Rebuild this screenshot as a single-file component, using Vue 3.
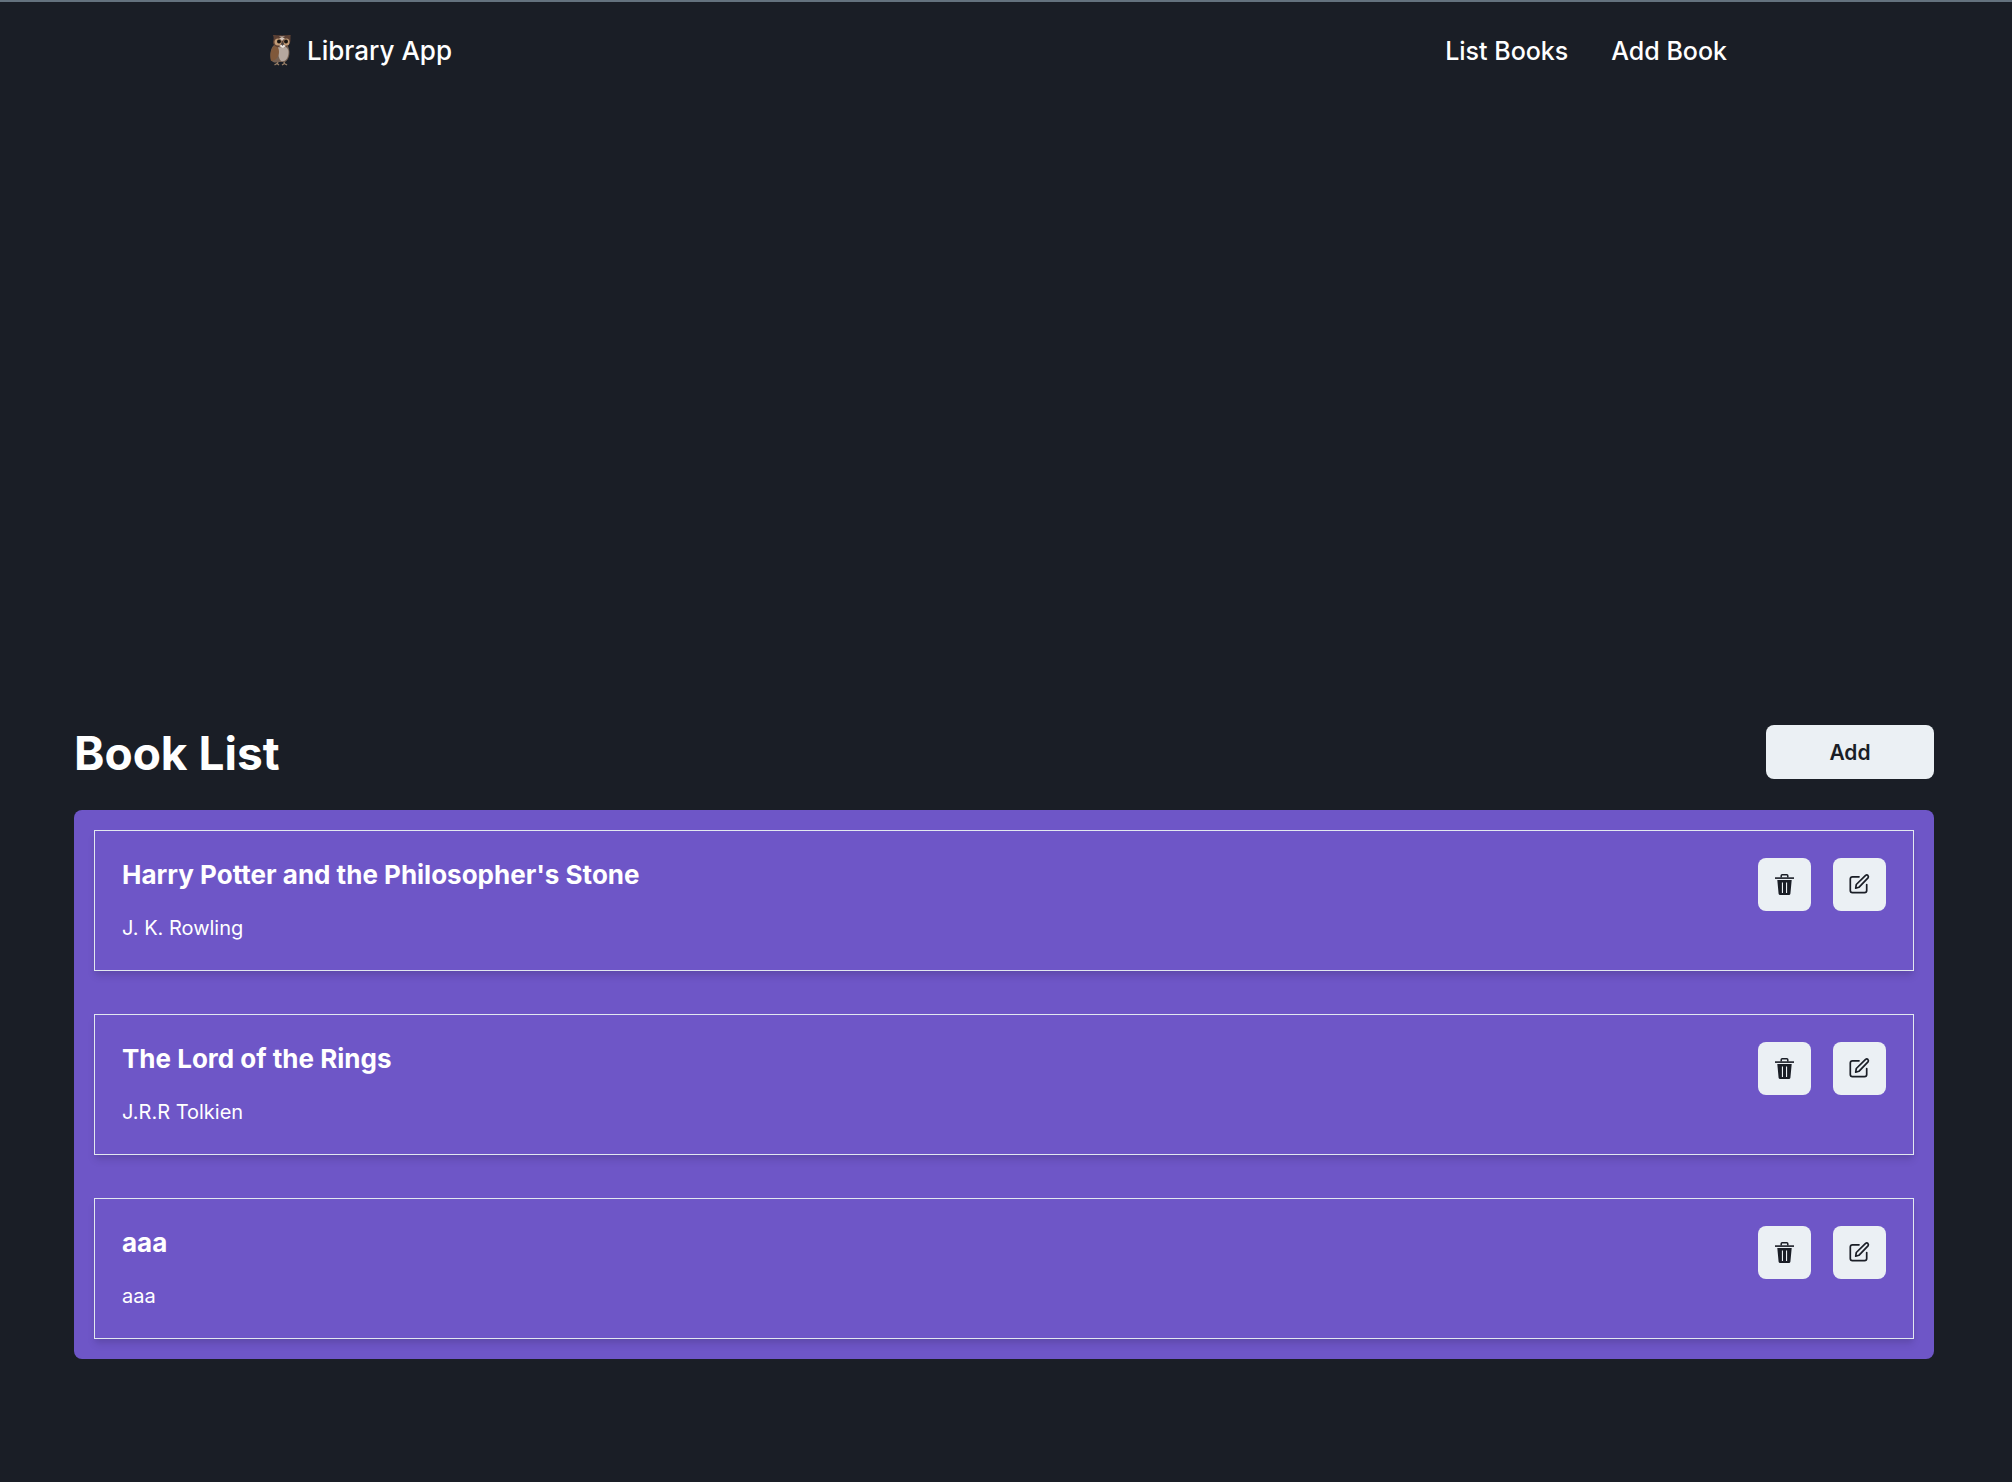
<script setup>
import { ref } from 'vue'

const books = ref([
  { id: 1, title: "Harry Potter and the Philosopher's Stone", author: 'J. K. Rowling' },
  { id: 2, title: 'The Lord of the Rings', author: 'J.R.R Tolkien' },
  { id: 3, title: 'aaa', author: 'aaa' },
])

function removeBook(id) {
  books.value = books.value.filter((book) => book.id !== id)
}
</script>

<template>
  <div class="app">
    <header class="header">
      <nav class="nav">
        <a class="brand" href="#">
          <svg class="owl" viewBox="-1 1 22 32" aria-hidden="true">
            <path d="M8 28 L7 30 M14 28 L14.500 30 M4.500 31 L7 29.500 L9 31 M12 31 L14.500 29.500 L17 31" stroke="#9a8068" stroke-width="1.400" fill="none" />
            <path d="M4 11 C0 15 0 21 1 26 C3 29 6 29 8 28 L15 28 C20 25 21 17 17 10 Z" fill="#756052" />
            <path d="M8 13 C14 11 19 13 18.500 19 C18 25 15 28 11 27 C8 24 8 18 8 13 Z" fill="#b5a79e" />
            <path d="M4 12 C0 16 0 22 1 27 C5 27 9 23 9 18 C9 14 7 11 4 12 Z" fill="#80583a" />
            <path d="M2 0 C6 2 9 1 12 1.500 C15 1 18 2 21 0 C20 3 21 6 20 9 C18 13 15 14 12 13 C7 14 3 12 3 8 C4 5 4 2 2 0 Z" fill="#5c4033" />
            <path d="M12 4 L9 2.500 L15 2.500 Z M12 7 L9 4 L15 4 Z" fill="#d5c7bc" />
            <ellipse cx="8" cy="8" rx="3.500" ry="3.500" fill="#c29b76" />
            <ellipse cx="16.500" cy="8" rx="3" ry="3.500" fill="#c29b76" />
            <path d="M9 12 L12.500 10 L16 12 L13 14 Z" fill="#efe6df" />
            <circle cx="9" cy="7.500" r="2" fill="#17120f" />
            <circle cx="16" cy="7.500" r="2" fill="#17120f" />
            <path d="M12.500 8 L14 10 L12.500 12 L11 10 Z" fill="#4b4441" />
          </svg>
          <span>Library App</span>
        </a>
        <div class="links">
          <a href="#list">List Books</a>
          <a href="#add">Add Book</a>
        </div>
      </nav>
    </header>

    <main class="main">
      <div class="toolbar">
        <h1>Book List</h1>
        <button class="btn add" type="button">Add</button>
      </div>

      <ul class="panel">
        <li v-for="book in books" :key="book.id" class="card">
          <div>
            <h2>{{ book.title }}</h2>
            <p>{{ book.author }}</p>
          </div>
          <div class="actions">
            <button class="btn icon" type="button" aria-label="Delete book" @click="removeBook(book.id)">
              <svg viewBox="0.500 0.500 24 24" aria-hidden="true">
                <path d="M8.700 5 V3.200 Q8.700 2.200 9.700 2.200 H14.300 Q15.300 2.200 15.300 3.200 V5" fill="none" stroke="currentColor" stroke-width="1.500" />
                <path d="M2.500 4.800 H21.500 V6.400 H2.500 Z" fill="currentColor" />
                <path fill-rule="evenodd" d="M4.800 7.600 H19.200 L17.900 21.200 Q17.700 22.500 16.400 22.500 H7.600 Q6.300 22.500 6.100 21.200 Z M9.400 10 V20.400 H10.500 V10 Z M13.500 10 V20.400 H14.600 V10 Z" fill="currentColor" />
              </svg>
            </button>
            <button class="btn icon" type="button" aria-label="Edit book">
              <svg viewBox="0.500 0.500 24 24" fill="none" stroke="currentColor" stroke-width="1.700" stroke-linecap="round" stroke-linejoin="round" aria-hidden="true">
                <path d="M11.500 4.300 H5 Q2.800 4.300 2.800 6.500 V18 Q2.800 20.200 5 20.200 H17 Q19.200 20.200 19.200 18 V12" />
                <path d="M8.200 15.700 L8.800 12 L18.100 2.900 Q19.300 2 20.400 3 Q21.400 4.200 20.500 5.400 L11.400 14.800 Z" />
              </svg>
            </button>
          </div>
        </li>
      </ul>
    </main>
  </div>
</template>

<style>
body {
  margin: 0;
  background: #1a1e26;
}
</style>

<style scoped>
.app {
  min-height: 100vh;
  box-sizing: border-box;
  border-top: 2px solid #64727e;
  background: #1a1e26;
  color: #fff;
  font-family: Inter, "Liberation Sans", sans-serif;
}

.header {
  padding: 0 16px;
}

.nav {
  display: flex;
  align-items: center;
  justify-content: space-between;
  box-sizing: border-box;
  max-width: 1474px;
  height: 98px;
  margin: 0 auto;
  padding-right: 16px;
}

.nav a {
  color: inherit;
  text-decoration: none;
  font-weight: 500;
  line-height: 36px;
}

.brand {
  display: flex;
  align-items: center;
  gap: 16px;
  font-size: 26px;
}

.owl {
  width: 22px;
  height: 32px;
}

.links {
  display: flex;
  gap: 43px;
  font-size: 25px;
}

.main {
  margin: 625px 78px 40px 74px;
}

.toolbar {
  display: flex;
  align-items: flex-end;
  justify-content: space-between;
  margin-bottom: 31px;
}

h1,
h2,
p {
  margin: 0;
}

h1 {
  font-size: 46px;
  line-height: 52px;
  font-weight: 700;
}

.btn {
  display: flex;
  align-items: center;
  justify-content: center;
  padding: 0;
  border: 0;
  border-radius: 8px;
  background: #ebf0f4;
  color: #1a1e26;
  font-family: inherit;
  cursor: pointer;
}

.add {
  width: 168px;
  height: 54px;
  font-size: 21px;
  font-weight: 600;
}

.panel {
  display: flex;
  flex-direction: column;
  gap: 43px;
  margin: 0;
  padding: 20px;
  border-radius: 8px;
  background: #6e56c7;
  list-style: none;
}

.card {
  display: flex;
  justify-content: space-between;
  padding: 27px;
  border: 1px solid #e2e8f0;
  box-shadow: 0 6px 8px -1px rgba(0, 0, 0, 0.1), 0 3px 5px -1px rgba(0, 0, 0, 0.06);
}

h2 {
  font-size: 26px;
  line-height: 34px;
  font-weight: 700;
}

p {
  margin-top: 21px;
  font-size: 20px;
  line-height: 30px;
}

.actions {
  display: flex;
  gap: 22px;
}

.icon {
  width: 53px;
  height: 53px;
}

.icon svg {
  width: 24px;
  height: 24px;
}
</style>
